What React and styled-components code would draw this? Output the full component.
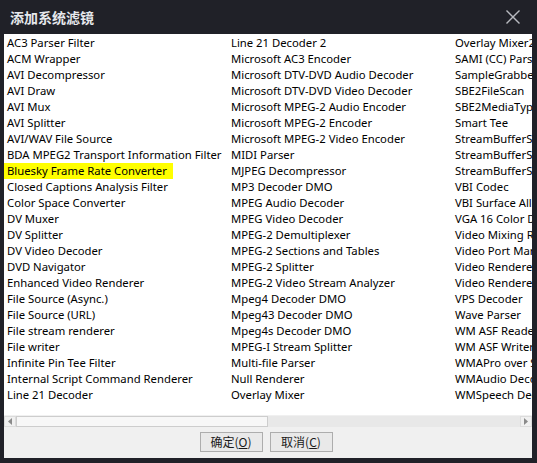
import styled, { createGlobalStyle } from "styled-components";

const GlobalStyle = createGlobalStyle`
  html, body {
    margin: 0;
    padding: 0;
    background: #202128;
  }
  * { box-sizing: border-box; }
`;

const col1 = [
  "AC3 Parser Filter",
  "ACM Wrapper",
  "AVI Decompressor",
  "AVI Draw",
  "AVI Mux",
  "AVI Splitter",
  "AVI/WAV File Source",
  "BDA MPEG2 Transport Information Filter",
  "Bluesky Frame Rate Converter",
  "Closed Captions Analysis Filter",
  "Color Space Converter",
  "DV Muxer",
  "DV Splitter",
  "DV Video Decoder",
  "DVD Navigator",
  "Enhanced Video Renderer",
  "File Source (Async.)",
  "File Source (URL)",
  "File stream renderer",
  "File writer",
  "Infinite Pin Tee Filter",
  "Internal Script Command Renderer",
  "Line 21 Decoder",
];

const col2 = [
  "Line 21 Decoder 2",
  "Microsoft AC3 Encoder",
  "Microsoft DTV-DVD Audio Decoder",
  "Microsoft DTV-DVD Video Decoder",
  "Microsoft MPEG-2 Audio Encoder",
  "Microsoft MPEG-2 Encoder",
  "Microsoft MPEG-2 Video Encoder",
  "MIDI Parser",
  "MJPEG Decompressor",
  "MP3 Decoder DMO",
  "MPEG Audio Decoder",
  "MPEG Video Decoder",
  "MPEG-2 Demultiplexer",
  "MPEG-2 Sections and Tables",
  "MPEG-2 Splitter",
  "MPEG-2 Video Stream Analyzer",
  "Mpeg4 Decoder DMO",
  "Mpeg43 Decoder DMO",
  "Mpeg4s Decoder DMO",
  "MPEG-I Stream Splitter",
  "Multi-file Parser",
  "Null Renderer",
  "Overlay Mixer",
];

const col3 = [
  "Overlay Mixer2",
  "SAMI (CC) Parser",
  "SampleGrabber",
  "SBE2FileScan",
  "SBE2MediaTypeProfile",
  "Smart Tee",
  "StreamBufferSink",
  "StreamBufferSink2",
  "StreamBufferSource",
  "VBI Codec",
  "VBI Surface Allocator",
  "VGA 16 Color Ditherer",
  "Video Mixing Renderer 9",
  "Video Port Manager",
  "Video Renderer",
  "Video Renderer",
  "VPS Decoder",
  "Wave Parser",
  "WM ASF Reader",
  "WM ASF Writer",
  "WMAPro over S/PDIF DMO",
  "WMAudio Decoder DMO",
  "WMSpeech Decoder DMO",
];

const filters = [...col1, ...col2, ...col3];

const Window = styled.div`
  width: 537px;
  height: 463px;
  background: #202128;
  display: flex;
  flex-direction: column;
  padding: 0 5px 5px 4px;
`;

const TitleBar = styled.div`
  height: 34px;
  flex: none;
  display: flex;
  align-items: center;
  justify-content: space-between;
  padding: 0 10px 1px 6px;
`;

const Title = styled.span`
  font-family: "Noto Sans CJK SC", sans-serif;
  font-size: 14px;
  font-weight: 700;
  color: #e6e8ec;
`;

const CloseButton = styled.button`
  border: none;
  background: none;
  padding: 0;
  width: 18px;
  height: 18px;
  display: flex;
  align-items: center;
  justify-content: center;
  cursor: pointer;
`;

const Panel = styled.div`
  flex: 1;
  display: flex;
  flex-direction: column;
  background: #f0f0f0;
  min-height: 0;
`;

const List = styled.div`
  height: 381px;
  background: #fff;
  overflow: hidden;
  display: grid;
  grid-auto-flow: column;
  grid-template-rows: repeat(23, 16px);
  grid-auto-columns: 224px;
  padding-top: 1px;
`;

const Item = styled.div`
  font-family: "Noto Sans", "Segoe UI", sans-serif;
  font-size: 11.3px;
  line-height: 16px;
  color: #000;
  white-space: nowrap;
  padding: 0 6px 0 3px;
  width: fit-content;
  background: ${(p) => (p.$selected ? "#ffff00" : "transparent")};
`;

const ScrollBar = styled.div`
  height: 12px;
  flex: none;
  display: flex;
  align-items: stretch;
  background: #e8e8e8;
  border-top: 1px solid #f0f0f0;
`;

const ScrollArrow = styled.div`
  width: 12px;
  display: flex;
  align-items: center;
  justify-content: center;
  background: #f0f0f0;
  border: 1px solid #dcdcdc;
`;

const Track = styled.div`
  flex: 1;
  display: flex;
`;

const Thumb = styled.div`
  width: 252px;
  background: #f7f7f7;
  border: 1px solid #cdcdcd;
`;

const Footer = styled.div`
  flex: 1;
  display: flex;
  justify-content: center;
  align-items: flex-start;
  gap: 7px;
  padding: 5px 4px 0 0;
`;

const Button = styled.button`
  width: 63px;
  height: 20px;
  border: 1px solid #adadad;
  background: #e9e9e9;
  font-family: "Noto Sans CJK SC", sans-serif;
  font-size: 12px;
  color: #1a1a1a;
  padding: 0;
  line-height: 18px;
`;

const Key = styled.span`
  text-decoration: underline;
  text-underline-offset: 1px;
`;

export default function App() {
  return (
    <>
      <GlobalStyle />
      <Window>
        <TitleBar>
          <Title>添加系统滤镜</Title>
          <CloseButton aria-label="close">
            <svg width="16" height="16" viewBox="0 0 16 16">
              <path d="M1.5 1.5 L14.5 14.5 M14.5 1.5 L1.5 14.5" stroke="#b8bac0" strokeWidth="1.4" fill="none" />
            </svg>
          </CloseButton>
        </TitleBar>
        <Panel>
          <List>
            {filters.map((name, i) => (
              <Item key={i} $selected={name === "Bluesky Frame Rate Converter"}>
                {name}
              </Item>
            ))}
          </List>
          <ScrollBar>
            <ScrollArrow>
              <svg width="4" height="7" viewBox="0 0 4 7">
                <path d="M4 0 L0 3.5 L4 7 Z" fill="#8a8a8a" />
              </svg>
            </ScrollArrow>
            <Track>
              <Thumb />
            </Track>
            <ScrollArrow>
              <svg width="4" height="7" viewBox="0 0 4 7">
                <path d="M0 0 L4 3.5 L0 7 Z" fill="#8a8a8a" />
              </svg>
            </ScrollArrow>
          </ScrollBar>
          <Footer>
            <Button>
              确定(<Key>O</Key>)
            </Button>
            <Button>
              取消(<Key>C</Key>)
            </Button>
          </Footer>
        </Panel>
      </Window>
    </>
  );
}
